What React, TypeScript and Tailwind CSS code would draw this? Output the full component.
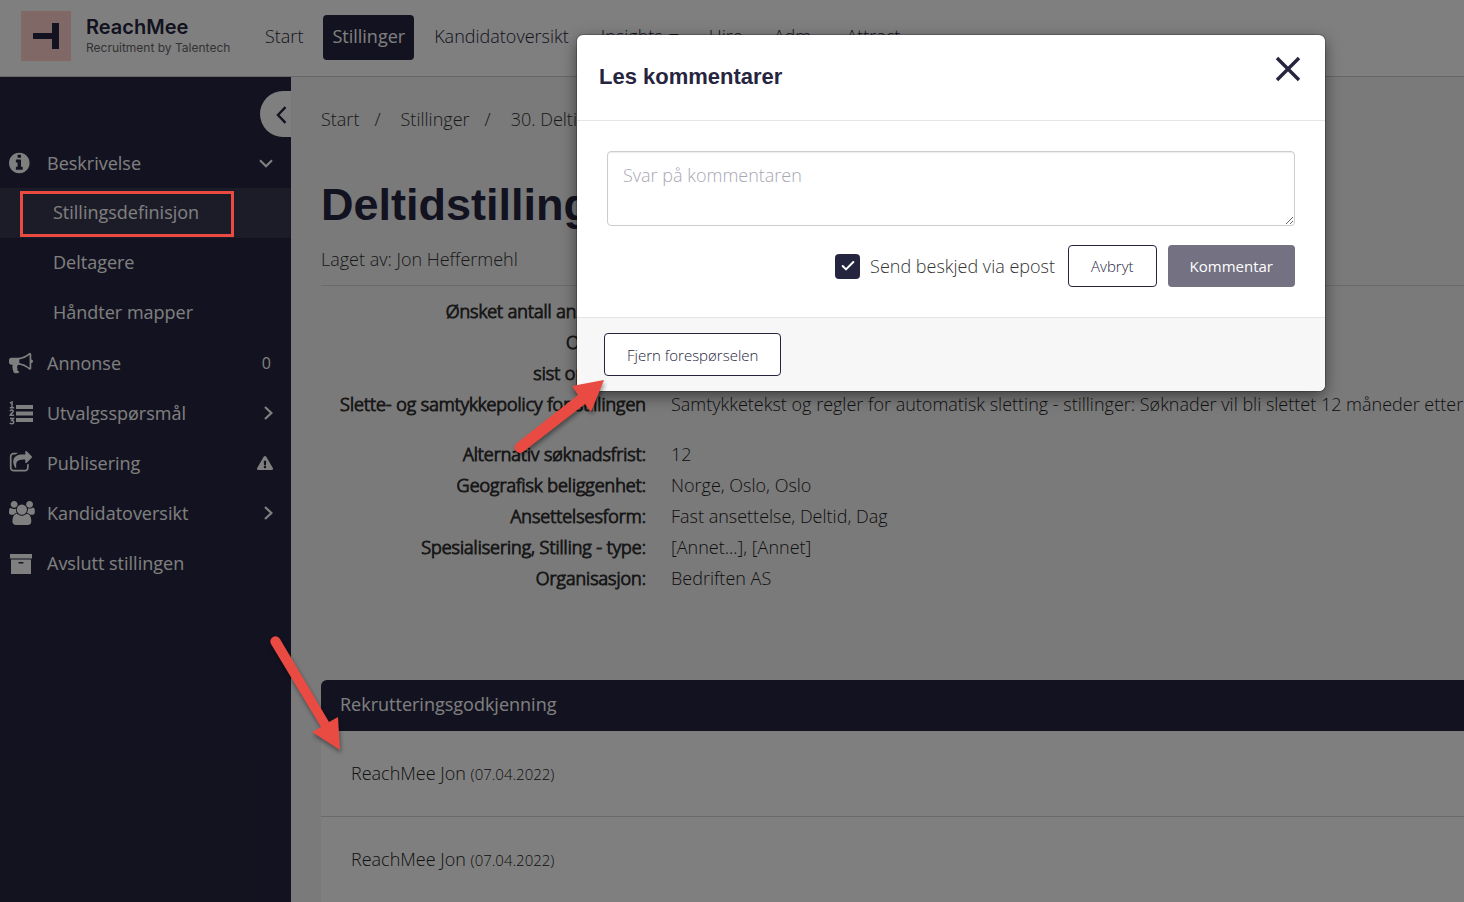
import { FaExclamationTriangle } from 'react-icons/fa';
import { Check } from 'lucide-react';
import type { ReactNode } from 'react';

const icons = {
  info: 'M1152 1376v-160q0-14-9-23t-23-9h-96v-512q0-14-9-23t-23-9h-320q-14 0-23 9t-9 23v160q0 14 9 23t23 9h96v320h-96q-14 0-23 9t-9 23v160q0 14 9 23t23 9h448q14 0 23-9t9-23zm-128-896v-160q0-14-9-23t-23-9h-192q-14 0-23 9t-9 23v160q0 14 9 23t23 9h192q14 0 23-9t9-23zm640 416q0 209-103 385.5t-279.5 279.5-385.5 103-385.5-103-279.5-279.5-103-385.5 103-385.5 279.5-279.5 385.5-103 385.5 103 279.5 279.5 103 385.5z',
  bullhorn:
    'M1664 640q53 0 90.5 37.5t37.5 90.5-37.5 90.5-90.5 37.5v384q0 52-38 90t-90 38q-417-347-812-380-58 19-91 66t-31 100.5 40 92.5q-20 33-23 65.5t6 58 33.5 55 48 50 61.5 50.5q-29 58-111.5 83t-168.5 11.5-132-55.5q-7-23-29.5-87.5t-32-94.5-23-89-15-101 3.5-98.5 22-110.5h-122q-66 0-113-47t-47-113v-192q0-66 47-113t113-47h480q435 0 896-384 52 0 90 38t38 90v384zm-128 604v-954q-394 302-768 343v270q377 42 768 341z',
  share:
    'M1472 989v259q0 119-84.5 203.5t-203.5 84.5h-832q-119 0-203.5-84.5t-84.5-203.5v-832q0-119 84.5-203.5t203.5-84.5h255q13 0 22.5 9.5t9.5 22.5q0 27-26 32-77 26-133 60-10 4-16 4h-112q-66 0-113 47t-47 113v832q0 66 47 113t113 47h832q66 0 113-47t47-113v-214q0-19 18-29 28-13 54-37 16-16 35-8 21 9 21 29zm237-496l-384 384q-18 19-45 19-12 0-25-5-39-17-39-59v-192h-160q-323 0-438 131-119 137-74 473 3 23-20 34-8 2-12 2-16 0-26-13-10-14-21-31t-39.5-68.5-49.5-99.5-38.5-114-17.5-122q0-49 3.5-91t14-90 28-88 47-81.5 68.5-74 94.5-61.5 124.5-48.5 159.5-30.5 196.5-11h160v-192q0-42 39-59 13-5 25-5 26 0 45 19l384 384q19 19 19 45t-19 45z',
  users:
    'M593 896q-162 5-265 128h-134q-82 0-138-40.5t-56-118.5q0-353 124-353 6 0 43.5 21t97.5 42.5 119 21.5q67 0 133-23-5 37-5 66 0 159 93 290zm1071 637q0 120-73 189.5t-194 69.5h-874q-121 0-194-69.5t-73-189.5q0-53 3.5-103.5t14-109 26.5-108.5 43-97.5 62-81 85.5-53.5 111.5-20q10 0 43 21.5t73 48 107 48 135 21.5 135-21.5 107-48 73-48 43-21.5q61 0 111.5 20t85.5 53.5 62 81 43 97.5 26.5 108.5 14 109 3.5 103.5zm-1024-1277q0 106-75 181t-181 75-181-75-75-181 75-181 181-75 181 75 75 181zm704 384q0 159-112.5 271.5t-271.5 112.5-271.5-112.5-112.5-271.5 112.5-271.5 271.5-112.5 271.5 112.5 112.5 271.5zm576 225q0 78-56 118.5t-138 40.5h-134q-103-123-265-128 93-131 93-290 0-29-5-66 66 23 133 23 59 0 119-21.5t97.5-42.5 43.5-21q124 0 124 353zm-128-609q0 106-75 181t-181 75-181-75-75-181 75-181 181-75 181 75 75 181z',
};

function Glyph({ d, box = '0 0 1792 1792' }: { d: string; box?: string }) {
  return (
    <svg viewBox={box} className="h-6 w-[26px]" preserveAspectRatio="xMinYMid meet" fill="currentColor" aria-hidden="true">
      <path d={d} />
    </svg>
  );
}

function ArchiveIcon() {
  return (
    <svg viewBox="0 0 24 24" className="h-6 w-6" fill="currentColor" aria-hidden="true">
      <path d="M1 3h22v4.6H1zM2 8.6h20V23H2zM9.6 11v1.6h4.8V11z" fillRule="evenodd" />
    </svg>
  );
}

function NumberedListIcon() {
  return (
    <svg viewBox="0 0 24 24" className="h-6 w-6" fill="none" stroke="currentColor" strokeWidth="1.5" aria-hidden="true">
      <path d="M7 4h17v4H7zM7 10.5h17v4H7zM7 17h17v4H7z" fill="currentColor" stroke="none" />
      <path d="M1 2.2L3 1v5.5M.8 6.8h4.4M1 10.2c.6-1.6 3.4-1.4 3.2.2C4 11.8 1.4 12.6 1.2 14.3h3.8M1 17.5h3.4L2.8 19.6c2.6 0 2.4 3.2.2 3.2-.9 0-1.7-.3-2.2-.8" />
    </svg>
  );
}

function Chevron({ direction }: { direction: 'right' | 'down' }) {
  return direction === 'right' ? (
    <svg viewBox="0 0 9 14" className="h-[14px] w-[9px]" fill="none" stroke="currentColor" strokeWidth="2.2" aria-hidden="true">
      <path d="M1 1l6.4 6L1 13" />
    </svg>
  ) : (
    <svg viewBox="0 0 14 9" className="h-[9px] w-[14px]" fill="none" stroke="currentColor" strokeWidth="2.2" aria-hidden="true">
      <path d="M1 1.2l6 6 6-6" />
    </svg>
  );
}

function Logo() {
  return (
    <a href="#" className="flex w-[244px] shrink-0 items-start gap-[15px]">
      <svg viewBox="0 0 50 50" className="h-[50px] w-[50px]" aria-hidden="true">
        <rect width="50" height="50" fill="#ffd1cd" />
        <path d="M12 22h19V12h7v26h-7V28H12z" fill="#262540" />
      </svg>
      <span className="flex flex-col pt-1 font-['Inter',sans-serif]">
        <span className="text-[20px] leading-6 font-semibold text-[#262540]">ReachMee</span>
        <span className="text-[12px] leading-[18px] font-normal whitespace-nowrap text-[#66666c]">Recruitment by Talentech</span>
      </span>
    </a>
  );
}

function SideItem({ icon, label, end }: { icon: ReactNode; label: string; end?: ReactNode }) {
  return (
    <li>
      <a href="#" className="flex h-[50px] items-center pr-[18px] pl-[9px]">
        <span className="flex w-[38px] items-center">{icon}</span>
        <span className="flex-1">{label}</span>
        {end}
      </a>
    </li>
  );
}

const subItems = ['Stillingsdefinisjon', 'Deltagere', 'Håndter mapper'];

function Sidebar() {
  return (
    <aside className="flex w-[291px] shrink-0 flex-col bg-[#262540] pt-[14px] font-normal text-white">
      <button type="button" aria-label="Skjul meny" className="mb-px flex h-[46px] w-[31px] items-center justify-end self-end rounded-l-full bg-white pt-0.5 pr-1 text-[#262540]">
        <svg viewBox="0 0 11 18" className="h-[18px] w-[11px]" fill="none" stroke="currentColor" strokeWidth="2.4" aria-hidden="true">
          <path d="M9.5 1.2L2 9l7.5 7.8" />
        </svg>
      </button>
      <ul>
        <SideItem icon={<Glyph d={icons.info} box="128 0 1792 1792" />} label="Beskrivelse" end={<Chevron direction="down" />} />
        {subItems.map((s, i) => (
          <li key={s}>
            <a href="#" className={i === 0 ? 'flex h-[50px] items-center bg-[#383751] pb-0.5 pl-[53px]' : 'flex h-[50px] items-center pb-0.5 pl-[53px]'}>
              {s}
            </a>
          </li>
        ))}
        <SideItem icon={<Glyph d={icons.bullhorn} />} label="Annonse" end={<span className="pr-0.5 text-base">0</span>} />
        <SideItem icon={<NumberedListIcon />} label="Utvalgsspørsmål" end={<Chevron direction="right" />} />
        <SideItem icon={<Glyph d={icons.share} />} label="Publisering" end={<FaExclamationTriangle size={16} />} />
        <SideItem icon={<Glyph d={icons.users} box="0 0 1920 1792" />} label="Kandidatoversikt" end={<Chevron direction="right" />} />
        <SideItem icon={<ArchiveIcon />} label="Avslutt stillingen" />
      </ul>
    </aside>
  );
}

const details: [string, string][] = [
  ['Ønsket antall ansettelser', ''],
  ['Opprettet', ''],
  ['sist oppdatert', ''],
  ['Slette- og samtykkepolicy for stillingen', 'Samtykketekst og regler for automatisk sletting - stillinger: Søknader vil bli slettet 12 måneder etter'],
  ['Alternativ søknadsfrist:', '12'],
  ['Geografisk beliggenhet:', 'Norge, Oslo, Oslo'],
  ['Ansettelsesform:', 'Fast ansettelse, Deltid, Dag'],
  ['Spesialisering, Stilling - type:', '[Annet...], [Annet]'],
  ['Organisasjon:', 'Bedriften AS'],
];

function Main() {
  return (
    <main className="min-w-0 flex-1 overflow-hidden bg-[#f4f4f4] pl-[30px] text-[#222]">
      <nav aria-label="Brødsmuler" className="flex h-[84px] items-center whitespace-nowrap text-[#333]">
        <a href="#">Start</a>
        <span className="px-[15px]">/</span>
        <a href="#" className="pl-[5px]">Stillinger</a>
        <span className="px-[15px]">/</span>
        <a href="#" className="pl-[5px]">30. Deltidstilling</a>
      </nav>
      <h1 className="pt-[17px] font-['Liberation_Sans',sans-serif] text-[45px] leading-[54px] font-bold text-[#262540]">Deltidstilling</h1>
      <p className="border-b border-[#d4d4d4] pt-[13px] pb-3 text-[#333]">Laget av: Jon Heffermehl</p>
      <dl className="pt-[10px] whitespace-nowrap">
        {details.map(([k, v], i) => (
          <div key={k} className={i === 3 ? 'flex h-[50px] gap-[25px] leading-[31px]' : 'flex h-[31px] gap-[25px] leading-[31px]'}>
            <dt className="w-[325px] text-right text-[#333] [-webkit-text-stroke:1px_#333]">{k}</dt>
            <dd>{v}</dd>
          </div>
        ))}
      </dl>
      <section className="pt-[86px]">
        <h2 className="flex h-[51px] items-center rounded-tl-md bg-[#262540] pb-[3px] pl-[19px] font-normal text-white">Rekrutteringsgodkjenning</h2>
        <ul className="bg-white">
          {[0, 1].map((n) => (
            <li key={n} className="flex h-[86px] items-center border-b border-[#d4d4d4] pl-[30px]">
              <p>
                ReachMee Jon <span className="text-[15px]">(07.04.2022)</span>
              </p>
            </li>
          ))}
        </ul>
      </section>
    </main>
  );
}

function CommentDialog() {
  return (
    <div className="absolute inset-0 flex items-start justify-end bg-black/50 pt-[35px] pr-[139px]">
      <div role="dialog" aria-labelledby="dialog-title" className="w-[748px] overflow-hidden rounded-md bg-white shadow-[0_5px_15px_rgba(0,0,0,0.5),0_0_0_1px_rgba(0,0,0,0.2)]">
        <header className="flex h-[86px] items-start justify-between border-b border-[#e5e5e5] pt-[21px] pr-[24px] pl-[22px]">
          <h2 id="dialog-title" className="pt-[7px] font-['Liberation_Sans',sans-serif] text-[22px] leading-7 font-bold text-[#262540]">Les kommentarer</h2>
          <button type="button" aria-label="Lukk">
            <svg viewBox="0 0 26 26" className="h-[26px] w-[26px]" fill="none" stroke="#262540" strokeWidth="3.4" aria-hidden="true">
              <path d="M2 2l22 22M24 2L2 24" />
            </svg>
          </button>
        </header>
        <form className="flex flex-col px-[30px] pt-[30px] pb-[30px]">
          <textarea aria-label="Svar på kommentaren" placeholder="Svar på kommentaren" className="h-[75px] w-full rounded border border-[#ccc] px-[15px] py-[9px] leading-7 text-[#555] shadow-[inset_0_1px_1px_rgba(0,0,0,0.08)] placeholder:text-[#a8a8b3]" />
          <div className="flex items-center justify-end pt-[19px]">
            <label className="mr-[13px] flex items-center gap-[10px] text-[#333]">
              <span className="grid h-[25px] w-[25px] place-items-center">
                <input type="checkbox" defaultChecked className="col-start-1 row-start-1 h-[25px] w-[25px] appearance-none rounded bg-[#262540]" />
                <Check size={16} strokeWidth={3} className="pointer-events-none col-start-1 row-start-1 text-white" />
              </span>
              Send beskjed via epost
            </label>
            <button type="button" className="mr-[11px] h-[42px] rounded border border-[#262540] px-[22px] text-[15px] text-[#262540]">Avbryt</button>
            <button type="button" className="h-[42px] rounded bg-[#737182] px-[22px] text-[15px] font-normal text-white">Kommentar</button>
          </div>
        </form>
        <footer className="border-t border-[#e5e5e5] bg-[#f7f7f7] px-[27px] py-[15px]">
          <button type="button" className="block h-[43px] rounded border border-[#262540] bg-white px-[22px] text-[15px] text-[#262540]">Fjern forespørselen</button>
        </footer>
      </div>
    </div>
  );
}

function Annotations() {
  return (
    <svg className="pointer-events-none absolute top-0 left-0 h-[902px] w-[1464px]" viewBox="0 0 1464 902" aria-hidden="true">
      <rect x="21.5" y="192.5" width="211" height="43" fill="none" stroke="#e94b43" strokeWidth="3" />
      <g fill="#e94b43" className="drop-shadow-[1px_3px_2px_rgba(0,0,0,0.4)]">
        <path d="M604 380L572 386L578 395L517 443A5 5 0 0 0 523 452L585 404L591 412Z" />
        <path d="M340 750L338 717L329 722L280 639A5 5 0 0 0 271 644L321 727L312 732Z" />
      </g>
    </svg>
  );
}

export default function App() {
  return (
    <div className="relative flex h-screen flex-col overflow-hidden font-['Open_Sans',sans-serif] text-[18px] leading-7 font-light">
      <header className="flex h-[77px] shrink-0 border-b border-[#ccc] bg-white pt-[11px] pl-[21px]">
        <Logo />
        <nav className="flex items-start pt-1 leading-[43px] whitespace-nowrap text-[#262540]">
          <a href="#" className="mr-5">Start</a>
          <a href="#" className="mr-5 h-[45px] rounded bg-[#262540] px-[9px] font-normal text-white">Stillinger</a>
          <a href="#" className="mr-8">Kandidatoversikt</a>
          <a href="#" className="mr-[30px] flex items-center gap-1.5">
            Insights
            <svg viewBox="0 0 10 5" className="h-[5px] w-[10px]" aria-hidden="true"><path d="M0 0h10L5 5z" fill="currentColor" /></svg>
          </a>
          <a href="#" className="mr-[31px]">Hire</a>
          <a href="#" className="mr-[31px]">Adm.</a>
          <a href="#">Attract</a>
        </nav>
      </header>
      <div className="flex min-h-0 flex-1">
        <Sidebar />
        <Main />
      </div>
      <CommentDialog />
      <Annotations />
    </div>
  );
}
